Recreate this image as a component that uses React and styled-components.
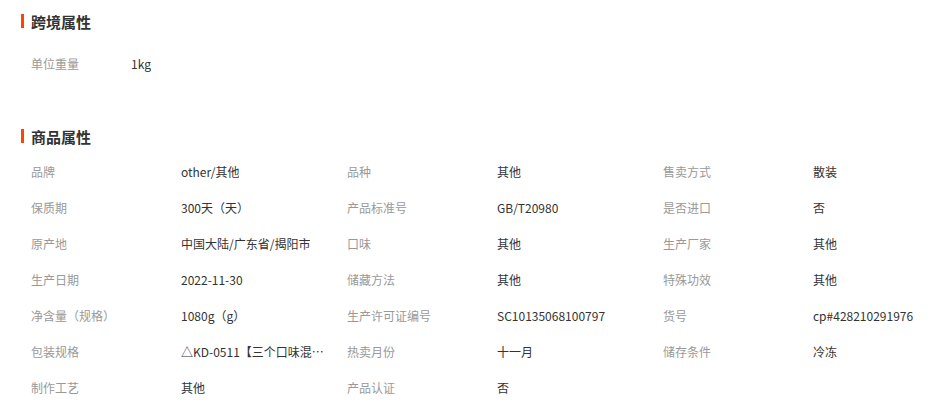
import React from "react";
import styled, { createGlobalStyle } from "styled-components";

const GlobalStyle = createGlobalStyle`
  body {
    margin: 0;
    background: #fff;
    font-family: "Noto Sans CJK SC", "Noto Sans", sans-serif;
  }
`;

const Page = styled.div`
  padding: 12px 0 0 21px;
  width: 941px;
  box-sizing: border-box;
`;

const Section = styled.section`
  margin-bottom: ${(props) => props.$gap || 0}px;
`;

const Title = styled.h3`
  display: flex;
  align-items: center;
  margin: 0;
  height: 18px;
  font-size: 15px;
  font-weight: bold;
  color: #333;

  &::before {
    content: "";
    width: 3px;
    height: 14px;
    margin-right: 7px;
    background-color: #ff4400;
  }
`;

const Grid = styled.div`
  display: grid;
  grid-template-columns: repeat(${(props) => props.$cols}, 316px);
  margin-top: ${(props) => props.$top}px;
  padding-left: 10px;
`;

const Cell = styled.div`
  display: flex;
  height: 36px;
  align-items: center;
  font-size: 12px;
`;

const Label = styled.span`
  width: ${(props) => props.$width}px;
  flex-shrink: 0;
  color: #999;
`;

const Value = styled.span`
  max-width: 146px;
  color: #333;
  white-space: nowrap;
  overflow: hidden;
  text-overflow: ellipsis;
`;

const crossBorder = [["单位重量", "1kg"]];

const goods = [
  ["品牌", "other/其他"],
  ["品种", "其他"],
  ["售卖方式", "散装"],
  ["保质期", "300天（天）"],
  ["产品标准号", "GB/T20980"],
  ["是否进口", "否"],
  ["原产地", "中国大陆/广东省/揭阳市"],
  ["口味", "其他"],
  ["生产厂家", "其他"],
  ["生产日期", "2022-11-30"],
  ["储藏方法", "其他"],
  ["特殊功效", "其他"],
  ["净含量（规格）", "1080g（g）"],
  ["生产许可证编号", "SC10135068100797"],
  ["货号", "cp#428210291976"],
  ["包装规格", "△KD-0511【三个口味混合装】1080g"],
  ["热卖月份", "十一月"],
  ["储存条件", "冷冻"],
  ["制作工艺", "其他"],
  ["产品认证", "否"],
];

function AttrGrid({ items, cols, labelWidth, top }) {
  return (
    <Grid $cols={cols} $top={top}>
      {items.map(([label, value]) => (
        <Cell key={label}>
          <Label $width={labelWidth}>{label}</Label>
          <Value>{value}</Value>
        </Cell>
      ))}
    </Grid>
  );
}

export default function App() {
  return (
    <Page>
      <GlobalStyle />
      <Section $gap={46}>
        <Title>跨境属性</Title>
        <AttrGrid items={crossBorder} cols={1} labelWidth={100} top={15} />
      </Section>
      <Section>
        <Title>商品属性</Title>
        <AttrGrid items={goods} cols={3} labelWidth={150} top={8} />
      </Section>
    </Page>
  );
}
